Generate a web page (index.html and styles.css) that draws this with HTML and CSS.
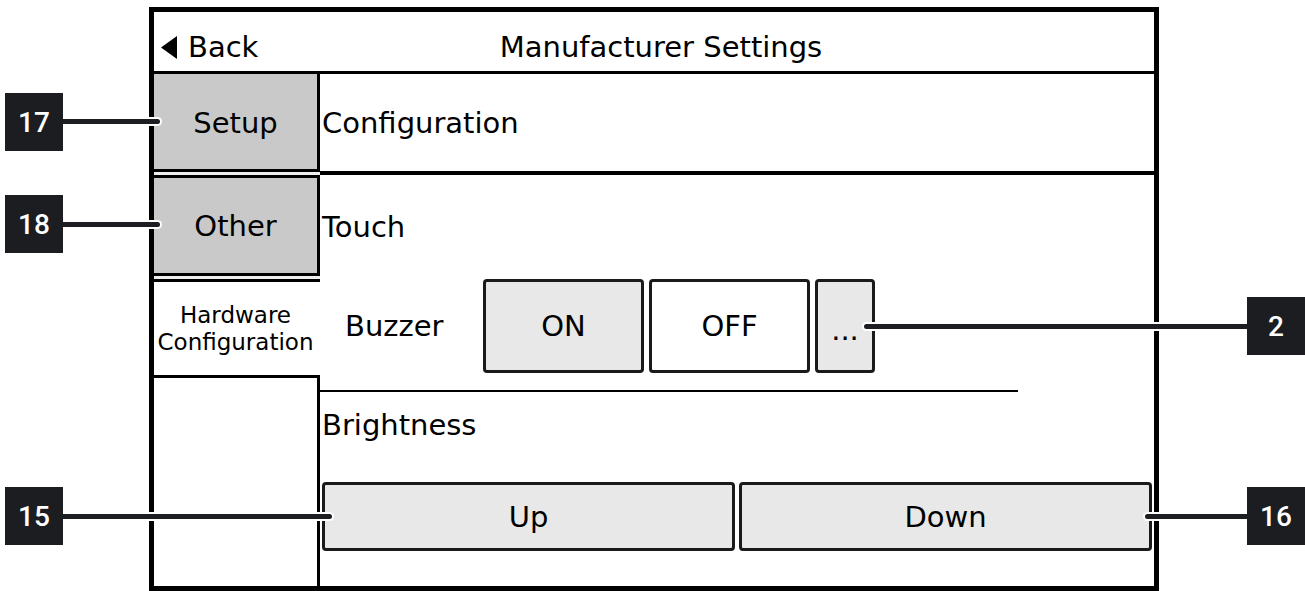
FILE: index.html
```html
<!DOCTYPE html>
<html lang="en">
<head>
<meta charset="utf-8">
<title>Manufacturer Settings</title>
<link rel="stylesheet" href="styles.css">
</head>
<body>
<div class="stage">
  <div class="device">
    <header class="topbar">
      <div class="back">
        <svg class="back-icon" width="16" height="23" viewBox="0 0 16 23"><polygon points="16,0 16,23 0,11.5" fill="#000"/></svg>
        <span>Back</span>
      </div>
      <div class="title">Manufacturer Settings</div>
    </header>
    <div class="main">
      <nav class="sidebar">
        <div class="tab tab-setup">Setup</div>
        <div class="tab tab-other">Other</div>
        <div class="tab tab-hw">Hardware<br>Configuration</div>
        <div class="sidebar-rest"></div>
      </nav>
      <section class="content">
        <div class="row-config">Configuration</div>
        <div class="row-touch">Touch</div>
        <div class="buzzer-row">
          <span class="buzzer-label">Buzzer</span>
          <div class="btn btn-gray btn-toggle">ON</div>
          <div class="btn btn-white btn-toggle">OFF</div>
          <div class="btn btn-gray btn-more">...</div>
        </div>
        <div class="sep"></div>
        <div class="brightness-label">Brightness</div>
        <div class="bright-btns">
          <div class="btn btn-gray btn-wide">Up</div>
          <div class="btn btn-gray btn-wide">Down</div>
        </div>
      </section>
    </div>
  </div>

  <div class="callout-line line-left line-17"></div>
  <div class="callout-line line-left line-18"></div>
  <div class="callout-line line-left line-15"></div>
  <div class="callout-line line-right line-2"></div>
  <div class="callout-line line-right line-16"></div>

  <div class="badge badge-17">17</div>
  <div class="badge badge-18">18</div>
  <div class="badge badge-2">2</div>
  <div class="badge badge-15">15</div>
  <div class="badge badge-16">16</div>
</div>
</body>
</html>
```

FILE: styles.css
```css
* { box-sizing: border-box; }

html, body {
  margin: 0;
  padding: 0;
  background: #fff;
}

.stage {
  position: relative;
  width: 1305px;
  height: 591px;
  overflow: hidden;
  padding: 7px 0 0 149px;
  font-family: "DejaVu Sans", "Liberation Sans", sans-serif;
  color: #000;
}

.device {
  width: 1010px;
  height: 584px;
  border: 5px solid #000;
  display: flex;
  flex-direction: column;
  background: #fff;
}

/* Header */
.topbar {
  height: 62px;
  flex: none;
  border-bottom: 3px solid #000;
  display: grid;
  grid-template-columns: 1fr;
  grid-template-rows: 34px;
  align-items: start;
  align-content: start;
  padding-top: 18px;
  font-size: 29px;
  line-height: 34px;
}

.back {
  grid-area: 1 / 1;
  justify-self: start;
  height: 34px;
  display: flex;
  align-items: center;
  gap: 11px;
  padding-left: 7px;
}

.back-icon { display: block; }

.title {
  grid-area: 1 / 1;
  justify-self: stretch;
  text-align: center;
  padding-left: 14px;
}

/* Main area */
.main {
  flex: 1;
  display: flex;
  min-height: 0;
}

.sidebar {
  width: 166px;
  flex: none;
  display: flex;
  flex-direction: column;
  background: #efefef;
}

.tab {
  display: flex;
  align-items: center;
  justify-content: center;
  font-size: 29px;
  line-height: 34px;
  text-align: center;
}

.tab-setup {
  height: 98px;
  background: #c9c9c9;
  border-right: 3px solid #000;
  border-bottom: 3px solid #000;
  padding-top: 2px;
}

.tab-other {
  height: 101px;
  margin-top: 3px;
  background: #c9c9c9;
  border: 3px solid #000;
  border-left: 0;
}

.tab-hw {
  height: 99px;
  margin-top: 3px;
  background: #fff;
  border-top: 3px solid #000;
  border-bottom: 3px solid #000;
  font-size: 23px;
  line-height: 27px;
  padding-right: 3px;
}

.sidebar-rest {
  flex: 1;
  background: #fff;
  border-right: 3px solid #000;
}

/* Content */
.content {
  flex: 1;
  display: flex;
  flex-direction: column;
  font-size: 29px;
  line-height: 34px;
}

.row-config {
  height: 101px;
  flex: none;
  border-bottom: 4px solid #000;
  display: flex;
  align-items: center;
  padding-left: 2px;
}

.row-touch {
  height: 104px;
  flex: none;
  display: flex;
  align-items: center;
  padding-left: 2px;
}

.buzzer-row {
  height: 94px;
  flex: none;
  display: flex;
  align-items: stretch;
  gap: 5px;
}

.buzzer-label {
  width: 158px;
  flex: none;
  padding-left: 25px;
  display: flex;
  align-items: center;
}

.btn {
  border: 3px solid #1a1a1a;
  border-radius: 4px;
  display: flex;
  align-items: center;
  justify-content: center;
}

.btn-gray { background: #e8e8e8; }
.btn-white { background: #fff; }

.btn-toggle { width: 161px; flex: none; }
.btn-more { width: 60px; flex: none; padding-top: 8px; }

.sep {
  width: 698px;
  height: 2px;
  margin-top: 17px;
  background: #000;
  flex: none;
}

.brightness-label {
  margin-top: 16px;
  padding-left: 2px;
  flex: none;
}

.bright-btns {
  margin-top: 40px;
  height: 69px;
  flex: none;
  display: flex;
  gap: 4px;
  padding: 0 2px;
}

.btn-wide { flex: 1; }

/* Callouts (overlay annotations) */
.callout-line {
  position: absolute;
  height: 5px;
  background: #1d1e21;
  box-shadow: 0 0 0 2px #fff;
}

.line-left { border-radius: 0 3px 3px 0; }
.line-right { border-radius: 3px 0 0 3px; }

.line-17 { left: 60px; width: 100px; top: 119px; }
.line-18 { left: 60px; width: 100px; top: 222px; }
.line-15 { left: 60px; width: 272px; top: 514px; }
.line-2  { left: 864px; width: 386px; top: 324px; }
.line-16 { left: 1145px; width: 105px; top: 514px; }

.badge {
  position: absolute;
  width: 58px;
  height: 58px;
  background: #1c1d21;
  color: #fff;
  font-family: Roboto, "Liberation Sans", sans-serif;
  font-weight: 500;
  font-size: 28px;
  display: flex;
  align-items: center;
  justify-content: center;
}

.badge-17 { left: 5px; top: 93px; }
.badge-18 { left: 5px; top: 195px; }
.badge-15 { left: 5px; top: 487px; }
.badge-2  { left: 1247px; top: 297px; }
.badge-16 { left: 1247px; top: 487px; }
```
